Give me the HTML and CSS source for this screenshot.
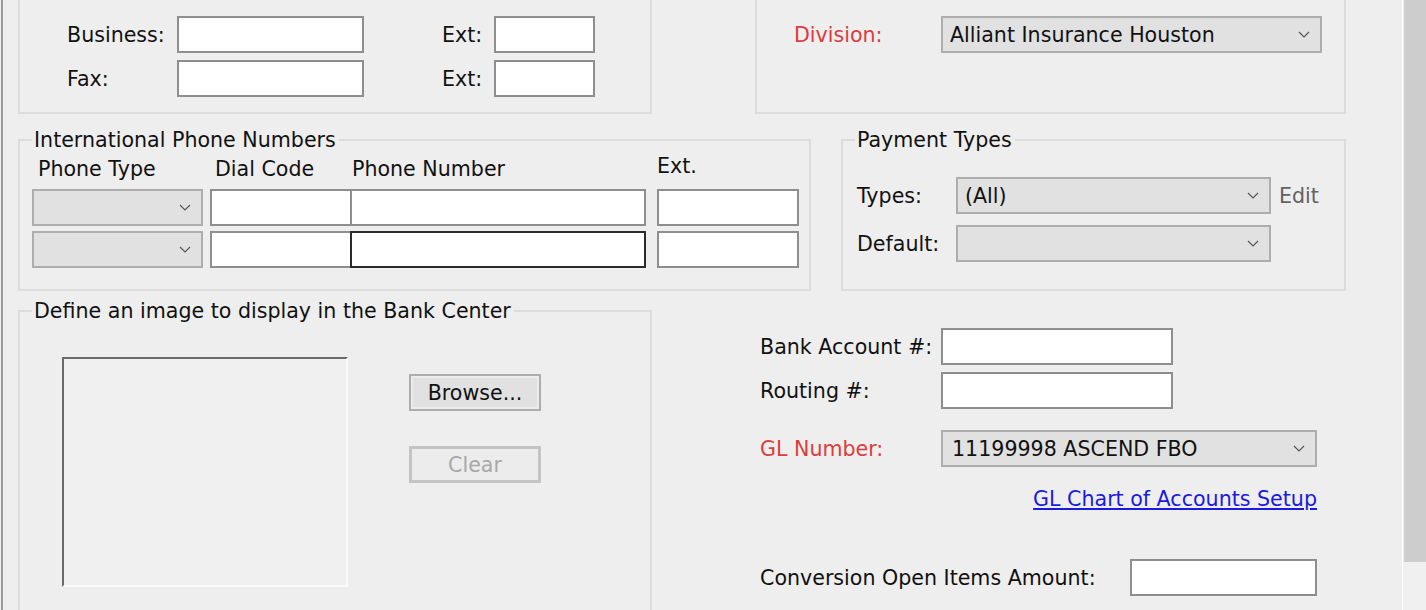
FILE: index.html
```html
<!DOCTYPE html>
<html lang="en">
<head>
    <meta charset="UTF-8">
    <title>Bank Setup</title>
    <link rel="stylesheet" href="styles.css">
</head>
<body>
    <div class="window">
        <div class="content">

            <!-- phones / division (tops scrolled away) -->
            <div class="row row-top">
                <fieldset class="group group-phones cut-top">
                    <div class="phone-grid">
                        <label for="business">Business:</label>
                        <input type="text" id="business" class="box box-phone">
                        <label for="businessExt" class="ext-label">Ext:</label>
                        <input type="text" id="businessExt" class="box box-short">

                        <label for="fax">Fax:</label>
                        <input type="text" id="fax" class="box box-phone">
                        <label for="faxExt" class="ext-label">Ext:</label>
                        <input type="text" id="faxExt" class="box box-short">
                    </div>
                </fieldset>

                <fieldset class="group group-division cut-top">
                    <div class="field-line">
                        <label class="required label-division">Division:</label>
                        <div class="combo combo-division">
                            <span>Alliant Insurance Houston</span>
                            <svg class="chev" viewBox="0 0 12 7"><path d="M1 1l5 5 5-5"/></svg>
                        </div>
                    </div>
                </fieldset>
            </div>

            <!-- international numbers / payment types -->
            <div class="row row-middle">
                <fieldset class="group group-intl">
                    <legend>International Phone Numbers</legend>
                    <div class="intl-grid">
                        <span class="col-head head-type">Phone Type</span>
                        <span class="col-head head-dial">Dial Code</span>
                        <span class="col-head head-number">Phone Number</span>
                        <span class="col-head head-ext">Ext.</span>

                        <div class="combo combo-type">
                            <span></span>
                            <svg class="chev" viewBox="0 0 12 7"><path d="M1 1l5 5 5-5"/></svg>
                        </div>
                        <input type="text" class="box box-dial">
                        <input type="text" class="box box-number">
                        <input type="text" class="box box-ext">

                        <div class="combo combo-type">
                            <span></span>
                            <svg class="chev" viewBox="0 0 12 7"><path d="M1 1l5 5 5-5"/></svg>
                        </div>
                        <input type="text" class="box box-dial">
                        <input type="text" class="box box-number focused">
                        <input type="text" class="box box-ext">
                    </div>
                </fieldset>

                <fieldset class="group group-payment">
                    <legend>Payment Types</legend>
                    <div class="payment-grid">
                        <label>Types:</label>
                        <div class="combo combo-payment">
                            <span>(All)</span>
                            <svg class="chev" viewBox="0 0 12 7"><path d="M1 1l5 5 5-5"/></svg>
                        </div>
                        <span class="edit-link">Edit</span>

                        <label>Default:</label>
                        <div class="combo combo-payment">
                            <span></span>
                            <svg class="chev" viewBox="0 0 12 7"><path d="M1 1l5 5 5-5"/></svg>
                        </div>
                        <span></span>
                    </div>
                </fieldset>
            </div>

            <!-- image / bank -->
            <div class="row row-bottom">
                <fieldset class="group group-image">
                    <legend>Define an image to display in the Bank Center</legend>
                    <div class="image-area">
                        <div class="image-well"></div>
                        <div class="image-buttons">
                            <button type="button" class="btn">Browse...</button>
                            <button type="button" class="btn" disabled>Clear</button>
                        </div>
                    </div>
                </fieldset>

                <div class="bank-panel">
                    <div class="field-line">
                        <label for="account" class="bank-label">Bank Account #:</label>
                        <input type="text" id="account" class="box box-bank">
                    </div>
                    <div class="field-line line-routing">
                        <label for="routing" class="bank-label">Routing #:</label>
                        <input type="text" id="routing" class="box box-bank">
                    </div>
                    <div class="field-line line-gl">
                        <label class="bank-label required">GL Number:</label>
                        <div class="combo combo-gl">
                            <span>11199998 ASCEND FBO</span>
                            <svg class="chev" viewBox="0 0 12 7"><path d="M1 1l5 5 5-5"/></svg>
                        </div>
                    </div>
                    <div class="link-line">
                        <a href="#">GL Chart of Accounts Setup</a>
                    </div>
                    <div class="field-line line-conversion">
                        <label for="conversion">Conversion Open Items Amount:</label>
                        <input type="text" id="conversion" class="box box-conversion">
                    </div>
                </div>
            </div>
        </div>

        <div class="scrollbar">
            <div class="thumb"></div>
        </div>
    </div>
</body>
</html>
```

FILE: styles.css
```css
* {
    box-sizing: border-box;
}

body {
    margin: 0;
    background-color: #eeeeee;
    font-family: "DejaVu Sans", Verdana, sans-serif;
    font-size: 20.6px;
    line-height: 22px;
    color: #111;
    overflow: hidden;
}

.window {
    display: flex;
    height: 610px;
    margin-left: 1px;
    border-left: 2px solid #9a9a9a;
}

.content {
    width: 1399px;
    padding-left: 15px;
}

/* fake scrollbar on the right */
.scrollbar {
    width: 24px;
    border-left: 1px solid #fff;
    padding-left: 1px;
    background-color: #f0f0f0;
}

.thumb {
    height: 562px;
    background-color: #cdcdcd;
}

.row {
    display: flex;
    align-items: stretch;
}

.row-middle {
    margin-top: 15px;
}

.row-bottom {
    margin-top: 9px;
    align-items: flex-start;
}

/* group boxes */
.group {
    margin: 0;
    padding: 0;
    min-width: 0;
    border: 2px solid #dcdcdc;
    flex: none;
}

.group legend {
    padding: 0 3px 0 2px;
    line-height: 22px;
}

.cut-top {
    border-top: none;
}

label {
    line-height: 22px;
}

.required {
    color: #dc3c3c;
}

/* text boxes */
.box {
    display: block;
    height: 37px;
    margin: 0;
    padding: 0 6px;
    font: inherit;
    background: #fff;
    border: 2px solid #8e8e8e;
    outline: none;
}

.box.focused {
    border-color: #2b2b2b;
}

/* drop downs */
.combo {
    display: flex;
    align-items: center;
    justify-content: space-between;
    height: 37px;
    padding: 0 10px 0 7px;
    background-color: #e1e1e1;
    border: 2px solid #adadad;
    white-space: nowrap;
}

.chev {
    width: 12px;
    height: 7px;
    flex: none;
}

.chev path {
    fill: none;
    stroke: #555;
    stroke-width: 1.2;
}

.field-line {
    display: flex;
    align-items: center;
}

/* top left: phones */
.group-phones {
    width: 634px;
    padding: 16px 0 15px 47px;
}

.phone-grid {
    display: grid;
    grid-template-columns: 110px 265px 52px 101px;
    row-gap: 7px;
    align-items: center;
}

.box-phone {
    width: 187px;
}

.box-short {
    width: 101px;
}

/* top right: division */
.group-division {
    width: 591px;
    margin-left: 103px;
    padding: 16px 0 0 37px;
}

.label-division {
    width: 147px;
}

.combo-division {
    width: 381px;
}

/* international phone numbers */
.group-intl {
    width: 793px;
    padding: 7px 0 21px 12px;
}

.intl-grid {
    display: grid;
    grid-template-columns: 178px 140px 307px 142px;
    row-gap: 5px;
}

.col-head {
    margin-bottom: 4px;
    white-space: nowrap;
}

.head-type {
    padding-left: 6px;
}

.head-dial {
    padding-left: 5px;
}

.head-number {
    padding-left: 2px;
}

.head-ext {
    margin-top: -3px;
}

.combo-type {
    width: 171px;
}

.box-dial {
    width: 142px;
}

.box-number {
    width: 296px;
    position: relative;
}

.box-ext {
    width: 142px;
}

/* payment types */
.group-payment {
    width: 505px;
    margin-left: 30px;
    padding: 26px 0 0 12px;
}

.payment-grid {
    display: grid;
    grid-template-columns: 99px 315px auto;
    row-gap: 11px;
    align-items: center;
    margin-left: 2px;
}

.combo-payment {
    width: 315px;
}

.edit-link {
    margin-left: 8px;
    color: #626262;
}

/* image box */
.group-image {
    width: 634px;
    height: 340px;
    padding: 35px 0 0 12px;
}

.image-area {
    display: flex;
}

.image-well {
    width: 286px;
    height: 230px;
    margin-left: 30px;
    background-color: #f0f0f0;
    border: 2px solid;
    border-color: #6a6a6a #fafafa #fafafa #6a6a6a;
}

.image-buttons {
    display: flex;
    flex-direction: column;
    gap: 35px;
    margin-left: 61px;
    padding-top: 17px;
}

.btn {
    width: 132px;
    height: 37px;
    padding: 0;
    font: inherit;
    color: #111;
    background-color: #e1e1e1;
    border: 2px solid #adadad;
    box-shadow: inset 0 0 0 2px #ececec;
}

.btn:disabled {
    color: #a8a8a8;
    background-color: #ececec;
    border: 3px solid #c4c4c4;
    box-shadow: none;
}

/* bank fields */
.bank-panel {
    width: 557px;
    margin-left: 108px;
    padding-top: 28px;
}

.bank-label {
    width: 181px;
}

.box-bank {
    width: 232px;
}

.line-routing {
    margin-top: 7px;
}

.line-gl {
    margin-top: 21px;
}

.combo-gl {
    width: 376px;
    padding-left: 9px;
}

.link-line {
    margin-top: 21px;
    text-align: right;
}

.link-line a {
    color: #1a1ae0;
}

.line-conversion {
    margin-top: 49px;
    justify-content: space-between;
}

.box-conversion {
    width: 187px;
}
```
